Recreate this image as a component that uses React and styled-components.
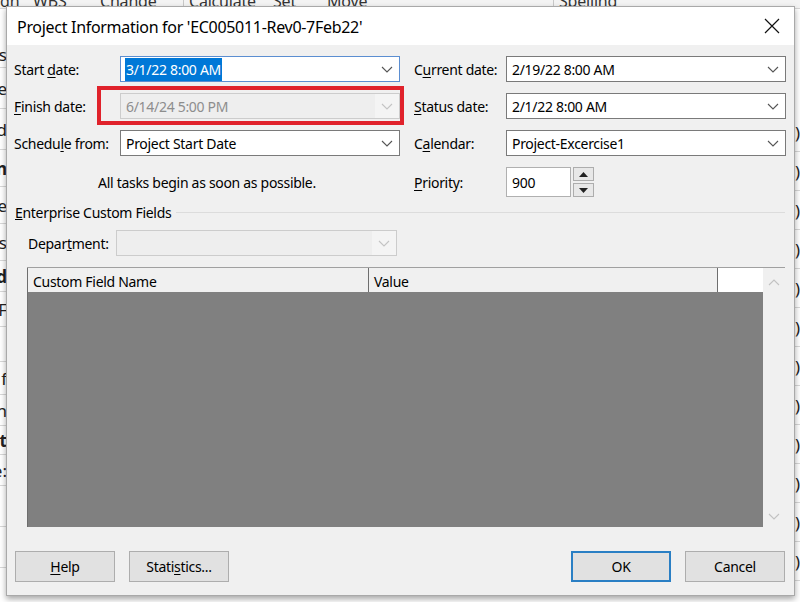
import React from "react";
import styled, { createGlobalStyle } from "styled-components";

const Global = createGlobalStyle`
  html, body { margin: 0; padding: 0; }
  body {
    width: 800px;
    height: 602px;
    overflow: hidden;
    font-family: "Noto Sans", "Open Sans", sans-serif;
    color: #000;
  }
`;

const Desktop = styled.div`
  position: relative;
  width: 800px;
  height: 602px;
  overflow: hidden;
  background: #f6f6f6;
  display: flex;
  flex-direction: column;
`;

/* ribbon of the application behind the dialog */
const Ribbon = styled.div`
  height: 8px;
  flex: none;
  display: flex;
  overflow: hidden;
  background: #f3f3f3;
  border-bottom: 1px solid #d6d6d6;
`;

const RibbonLabel = styled.div`
  flex: none;
  width: ${(p) => p.w}px;
  height: 8px;
  box-sizing: border-box;
  font-size: 16px;
  line-height: 2px;
  letter-spacing: -0.2px;
  color: #333;
  white-space: nowrap;
  padding-left: ${(p) => p.pad || 0}px;
  border-left: ${(p) => (p.sep ? "1px solid #c8c8c8" : "none")};
`;

const Workspace = styled.div`
  flex: 1;
  display: flex;
  background: #fff;
`;

const SideColumn = styled.div`
  width: ${(p) => p.w}px;
  flex: none;
  display: flex;
  flex-direction: column;
  overflow: hidden;
  padding-top: ${(p) => p.top}px;
`;

const SideRow = styled.div`
  height: ${(p) => p.h || 34}px;
  flex: none;
  display: flex;
  align-items: center;
  justify-content: ${(p) => (p.end ? "flex-end" : "flex-start")};
  border-bottom: 1px solid #d8d8d8;
  font-size: 17px;
  font-weight: ${(p) => (p.bold ? 700 : 400)};
  white-space: nowrap;
  color: #222;
`;

const Dialog = styled.div`
  position: absolute;
  left: 6px;
  top: 6px;
  width: 789px;
  height: 590px;
  box-sizing: border-box;
  border: 1px solid #a9a9a9;
  background: #f0f0f0;
  box-shadow: 0 3px 6px rgba(0, 0, 0, 0.35);
  display: flex;
  flex-direction: column;
  font-size: 14px;
  letter-spacing: -0.3px;
`;

const TitleBar = styled.div`
  height: 38px;
  flex: none;
  background: #fff;
  display: flex;
  align-items: center;
  justify-content: space-between;
  padding: 0 14px 0 10px;
`;

const Title = styled.div`
  font-size: 16px;
  letter-spacing: -0.3px;
  color: #000;
  padding-top: 1px;
`;

const CloseIcon = () => (
  <svg width="16" height="16" viewBox="0 0 16 16">
    <path d="M1 1 L15 15 M15 1 L1 15" stroke="#111" strokeWidth="1.2" fill="none" />
  </svg>
);

const Body = styled.div`
  flex: 1;
  display: flex;
  flex-direction: column;
  padding: 11px 9px 0 7px;
`;

const FormGrid = styled.div`
  display: grid;
  grid-template-columns: 106px 280px 14px 92px 280px;
  grid-template-rows: 26px 26px 26px 30px;
  row-gap: 11px;
  align-items: center;
`;

const Label = styled.div`
  grid-column: ${(p) => p.col};
  white-space: nowrap;
  color: #000;
  u { text-decoration-thickness: 1px; text-underline-offset: 2px; }
`;

const ComboBox = styled.div`
  grid-column: ${(p) => p.col || "auto"};
  position: relative;
  height: 26px;
  box-sizing: border-box;
  display: flex;
  align-items: center;
  border: 1px solid ${(p) => (p.focused ? "#5b8ed1" : p.disabled ? "#cccccc" : "#7a7a7a")};
  background: ${(p) => (p.disabled ? "#eeeeee" : "#fff")};
  color: ${(p) => (p.disabled ? "#8d8d8d" : "#000")};
  padding-left: 5px;
  width: ${(p) => (p.w ? `${p.w}px` : "auto")};
`;

const ComboText = styled.span`
  flex: 1;
  white-space: nowrap;
  ${(p) =>
    p.selected &&
    `
    flex: none;
    background: #0078d7;
    color: #fff;
    padding: 2px 1px;
    margin-left: -1px;
  `}
`;

const ChevronBox = styled.div`
  width: 24px;
  height: 100%;
  display: flex;
  align-items: center;
  justify-content: center;
  background: ${(p) => (p.disabled ? "#f4f4f4" : "transparent")};
  margin-left: auto;
`;

const Chevron = ({ color = "#555", up = false }) => (
  <svg width="12" height="7" viewBox="0 0 12 7">
    <polyline
      points={up ? "1,6 6,1 11,6" : "1,1 6,6 11,1"}
      stroke={color}
      strokeWidth="1.1"
      fill="none"
    />
  </svg>
);

const Combo = ({ text, col, focused, disabled, selected, w }) => (
  <ComboBox col={col} focused={focused} disabled={disabled} w={w}>
    <ComboText selected={selected}>{text}</ComboText>
    <ChevronBox disabled={disabled}>
      <Chevron color={disabled ? "#c4c4c4" : "#555"} />
    </ChevronBox>
  </ComboBox>
);

const Marked = styled.div`
  grid-column: ${(p) => p.col};
  position: relative;
`;

/* red annotation frame drawn over the finish date field */
const RedFrame = styled.div`
  position: absolute;
  left: -23px;
  top: -7px;
  right: -4px;
  bottom: -6px;
  border: 4px solid #e0222b;
  pointer-events: none;
`;

const Note = styled.div`
  grid-column: 1 / 3;
  text-align: center;
`;

const PriorityCell = styled.div`
  grid-column: 5;
  display: flex;
  align-items: center;
  gap: 2px;
  height: 30px;
`;

const NumberField = styled.div`
  width: 65px;
  height: 30px;
  box-sizing: border-box;
  border: 1px solid #b0b0b0;
  background: #fff;
  display: flex;
  align-items: center;
  padding-left: 5px;
`;

const Spinner = styled.div`
  display: flex;
  flex-direction: column;
  gap: 2px;
`;

const SpinButton = styled.div`
  width: 21px;
  height: 14px;
  box-sizing: border-box;
  border: 1px solid #adadad;
  background: #e8e8e8;
  display: flex;
  align-items: center;
  justify-content: center;
`;

const Triangle = ({ up }) => (
  <svg width="9" height="5" viewBox="0 0 9 5">
    <polygon points={up ? "0,5 4.5,0 9,5" : "0,0 4.5,5 9,0"} fill="#222" />
  </svg>
);

const GroupHeader = styled.div`
  display: flex;
  align-items: center;
  gap: 5px;
  margin-top: 7px;
  height: 16px;
  padding-left: 1px;
`;

const GroupRule = styled.div`
  flex: 1;
  height: 1px;
  background: #dcdcdc;
`;

const FieldRow = styled.div`
  display: flex;
  align-items: center;
  margin-top: 10px;
  padding-left: 14px;
`;

const FieldLabel = styled.div`
  width: 88px;
  white-space: nowrap;
`;

const Table = styled.div`
  margin-top: 11px;
  margin-left: 13px;
  width: 758px;
  height: 260px;
  box-sizing: border-box;
  border-top: 1px solid #a0a0a0;
  display: flex;
`;

const TableMain = styled.div`
  flex: 1;
  display: flex;
  flex-direction: column;
  border-left: 1px solid #6e6e6e;
`;

const HeaderRow = styled.div`
  height: 24px;
  flex: none;
  display: grid;
  grid-template-columns: 341px 349px 45px;
`;

const HeaderCell = styled.div`
  display: flex;
  align-items: flex-end;
  padding: 0 0 1px 5px;
  background: ${(p) => (p.blank ? "#fff" : "#f0f0f0")};
  border-right: ${(p) => (p.blank ? "none" : "1px solid #6e6e6e")};
  white-space: nowrap;
`;

const GridBody = styled.div`
  flex: 1;
  background: #808080;
`;

const ScrollBar = styled.div`
  width: 22px;
  flex: none;
  background: #f0f0f0;
  display: flex;
  flex-direction: column;
  justify-content: space-between;
  align-items: center;
  padding: 11px 0 7px;
`;

const Footer = styled.div`
  display: flex;
  margin-top: 24px;
  padding-left: 1px;
  gap: 14px;
`;

const Spacer = styled.div`
  flex: 1;
`;

const Button = styled.div`
  width: 100px;
  height: 31px;
  box-sizing: border-box;
  display: flex;
  align-items: center;
  justify-content: center;
  background: #e1e1e1;
  border: ${(p) => (p.primary ? "2px solid #2a7fc4" : "1px solid #adadad")};
  color: #000;
  u { text-decoration-thickness: 1px; text-underline-offset: 2px; }
`;

export default function App() {
  return (
    <>
      <Global />
      <Desktop>
        <Ribbon>
          <RibbonLabel w={33}>gn</RibbonLabel>
          <RibbonLabel w={67}>WBS</RibbonLabel>
          <RibbonLabel w={83}>Change</RibbonLabel>
          <RibbonLabel w={90} sep pad={5}>Calculate</RibbonLabel>
          <RibbonLabel w={54}>Set</RibbonLabel>
          <RibbonLabel w={226}>Move</RibbonLabel>
          <RibbonLabel w={66} sep pad={5}>Spelling</RibbonLabel>
        </Ribbon>
        <Workspace>
          <SideColumn w={7} top={32}>
            <SideRow end h={26}>es</SideRow>
            <SideRow end h={40}>e</SideRow>
            <SideRow end h={40}>d</SideRow>
            <SideRow end bold h={36}>n</SideRow>
            <SideRow end h={36}>e</SideRow>
            <SideRow end h={36}>s</SideRow>
            <SideRow end bold h={30}>d</SideRow>
            <SideRow end h={34}>F</SideRow>
            <SideRow end h={34}> </SideRow>
            <SideRow end h={32}>f</SideRow>
            <SideRow end h={30}>n</SideRow>
            <SideRow end bold h={28}>t</SideRow>
            <SideRow end h={30}>e:</SideRow>
            <SideRow end h={40}> </SideRow>
            <SideRow end h={40}> </SideRow>
          </SideColumn>
          <Spacer />
          <SideColumn w={5} top={104}>
            <SideRow h={38}>)</SideRow>
            <SideRow h={38}>)</SideRow>
            <SideRow h={38}>)</SideRow>
            <SideRow h={38}>)</SideRow>
            <SideRow h={38}>)</SideRow>
            <SideRow h={38}>)</SideRow>
            <SideRow h={38}>)</SideRow>
            <SideRow h={38}>)</SideRow>
            <SideRow h={38}>)</SideRow>
            <SideRow h={38}>)</SideRow>
            <SideRow h={38}>)</SideRow>
            <SideRow h={38}>)</SideRow>
          </SideColumn>
        </Workspace>

        <Dialog>
          <TitleBar>
            <Title>Project Information for 'EC005011-Rev0-7Feb22'</Title>
            <CloseIcon />
          </TitleBar>
          <Body>
            <FormGrid>
              <Label col={1}>Start <u>d</u>ate:</Label>
              <Combo col={2} text="3/1/22 8:00 AM" focused selected />
              <Label col={4}>C<u>u</u>rrent date:</Label>
              <Combo col={5} text="2/19/22 8:00 AM" />

              <Label col={1}><u>F</u>inish date:</Label>
              <Marked col={2}>
                <Combo text="6/14/24 5:00 PM" disabled />
                <RedFrame />
              </Marked>
              <Label col={4}><u>S</u>tatus date:</Label>
              <Combo col={5} text="2/1/22 8:00 AM" />

              <Label col={1}>Schedu<u>l</u>e from:</Label>
              <Combo col={2} text="Project Start Date" />
              <Label col={4}>C<u>a</u>lendar:</Label>
              <Combo col={5} text="Project-Excercise1" />

              <Note>All tasks begin as soon as possible.</Note>
              <Label col={4}><u>P</u>riority:</Label>
              <PriorityCell>
                <NumberField>900</NumberField>
                <Spinner>
                  <SpinButton><Triangle up /></SpinButton>
                  <SpinButton><Triangle /></SpinButton>
                </Spinner>
              </PriorityCell>
            </FormGrid>

            <GroupHeader>
              <span><u>E</u>nterprise Custom Fields</span>
              <GroupRule />
            </GroupHeader>

            <FieldRow>
              <FieldLabel>Depar<u>t</u>ment:</FieldLabel>
              <Combo text="" disabled w={281} />
            </FieldRow>

            <Table>
              <TableMain>
                <HeaderRow>
                  <HeaderCell>Custom Field Name</HeaderCell>
                  <HeaderCell>Value</HeaderCell>
                  <HeaderCell blank />
                </HeaderRow>
                <GridBody />
              </TableMain>
              <ScrollBar>
                <Chevron up color="#c2c2c2" />
                <Chevron color="#c2c2c2" />
              </ScrollBar>
            </Table>

            <Footer>
              <Button><u>H</u>elp</Button>
              <Button>Stati<u>s</u>tics...</Button>
              <Spacer />
              <Button primary>OK</Button>
              <Button>Cancel</Button>
            </Footer>
          </Body>
        </Dialog>
      </Desktop>
    </>
  );
}
